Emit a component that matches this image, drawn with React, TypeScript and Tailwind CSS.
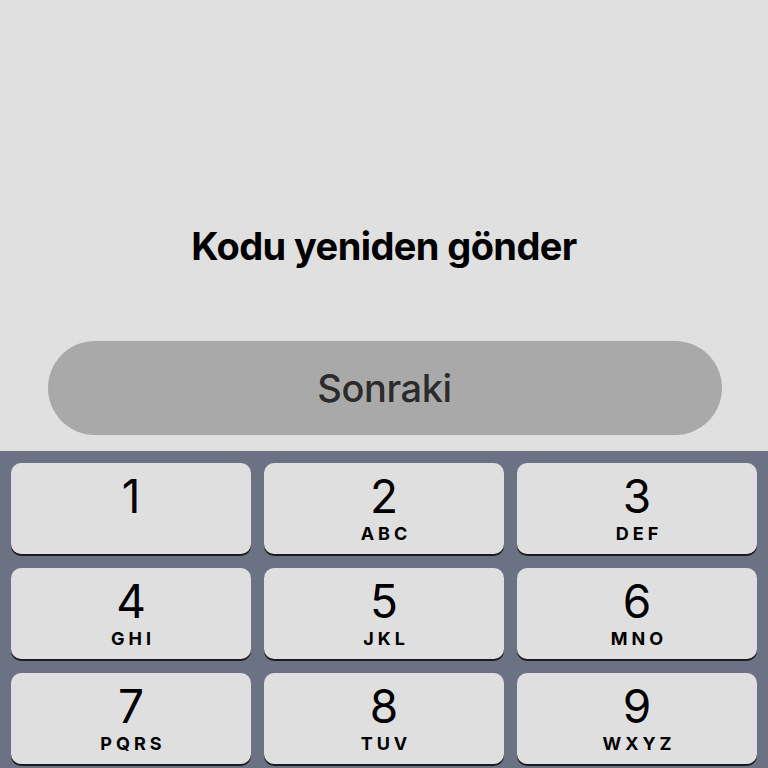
import React from "react";

const keys: [string, string][][] = [
  [["1", ""], ["2", "ABC"], ["3", "DEF"]],
  [["4", "GHI"], ["5", "JKL"], ["6", "MNO"]],
  [["7", "PQRS"], ["8", "TUV"], ["9", "WXYZ"]],
];

export default function App() {
  return (
    <div
      className="w-[768px] h-[768px] overflow-hidden flex flex-col bg-[#e0e0e0]"
      style={{ fontFamily: 'Inter, "Liberation Sans", Arial, sans-serif' }}
    >
      <div className="flex flex-col items-center">
        <div className="pt-[222px] h-[341px] text-[38px] font-bold text-black leading-[48px] tracking-[-0.6px]">
          Kodu yeniden gönder
        </div>
        <div className="w-[674px] h-[94px] ml-[1px] rounded-full bg-[#a9a9a9] flex items-center justify-center text-[38px] font-medium text-[#2b2b2b] leading-none tracking-[-0.4px]">
          Sonraki
        </div>
      </div>
      <div className="mt-[16px] flex-1 bg-[#6b7284] px-[11px] pt-[12px] flex flex-col gap-[14px]">
        {keys.map((row, i) => (
          <div key={i} className="grid grid-cols-3 gap-[13px]">
            {row.map(([d, l]) => (
              <div
                key={d}
                className="h-[91px] rounded-[10px] bg-[#dfdfdf] shadow-[0_2px_0_#1c1c1e] flex flex-col items-center pt-[9px]"
              >
                <div className="text-[46px] leading-[48px] text-black">{d}</div>
                <div className="mt-[4px] text-[18px] font-bold leading-[20px] tracking-[4px] text-black pl-[4px]">
                  {l}
                </div>
              </div>
            ))}
          </div>
        ))}
      </div>
    </div>
  );
}
